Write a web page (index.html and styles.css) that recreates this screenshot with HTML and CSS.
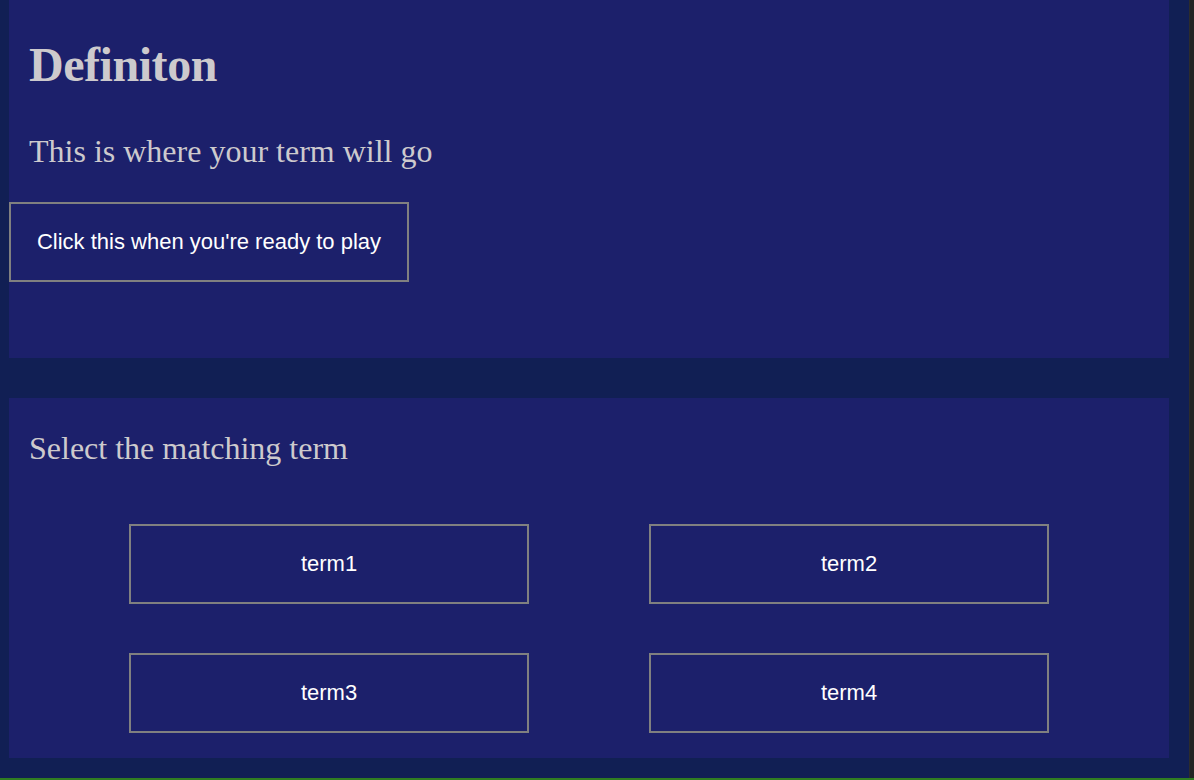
FILE: index.html
```html
<!DOCTYPE html>
<html lang="en">
<head>
<meta charset="utf-8">
<title>Definition Match</title>
<link rel="stylesheet" href="styles.css">
</head>
<body>
  <div class="frame">
    <main class="content">
      <section class="panel panel-def">
        <h1 class="def-title">Definiton</h1>
        <p class="def-text">This is where your term will go</p>
        <button class="btn btn-start" type="button">Click this when you're ready to play</button>
      </section>
      <section class="panel panel-terms">
        <p class="terms-prompt">Select the matching term</p>
        <div class="terms-grid">
          <button class="btn btn-term" type="button">term1</button>
          <button class="btn btn-term" type="button">term2</button>
          <button class="btn btn-term" type="button">term3</button>
          <button class="btn btn-term" type="button">term4</button>
        </div>
      </section>
    </main>
    <div class="scroll-edge"></div>
  </div>
  <div class="green-bar"></div>
</body>
</html>
```

FILE: styles.css
```css
html, body {
  margin: 0;
  padding: 0;
  height: 780px;
  overflow: hidden;
}

body {
  background: #111f54;
  font-family: "Liberation Serif", "Times New Roman", serif;
  display: flex;
  flex-direction: column;
}

.frame {
  display: flex;
  flex: 1;
}

.content {
  flex: 1;
  display: flex;
  flex-direction: column;
  gap: 40px;
  padding: 0 20px 20px 9px;
}

.scroll-edge {
  width: 5px;
  background: #232323;
  border-left: 1px solid #2c2c2c;
  box-sizing: border-box;
}

.green-bar {
  height: 2px;
  background: #2f7d22;
}

.panel {
  background: #1c206b;
  display: flex;
  flex-direction: column;
}

.panel-def {
  height: 358px;
  box-sizing: border-box;
  padding-top: 37px;
}

.def-title {
  margin: 0;
  padding-left: 20px;
  font-size: 48px;
  line-height: 56px;
  font-weight: bold;
  letter-spacing: -0.45px;
  color: #cdcacd;
}

.def-text,
.terms-prompt {
  margin: 0;
  padding-left: 20px;
  font-size: 32px;
  line-height: 40px;
  font-weight: normal;
  color: #cdcacd;
}

.def-text {
  margin-top: 38px;
}

.btn {
  box-sizing: border-box;
  width: 400px;
  height: 80px;
  border: 2px solid #808080;
  background: transparent;
  color: #ffffff;
  font-family: "Liberation Sans", Arial, Helvetica, sans-serif;
  font-size: 22px;
  padding: 0;
  margin: 0;
  cursor: pointer;
}

.btn-start {
  margin-top: 31px;
}

.panel-terms {
  height: 360px;
  box-sizing: border-box;
  padding-top: 30px;
}

.terms-grid {
  margin-top: 56px;
  display: grid;
  grid-template-columns: 400px 400px;
  column-gap: 120px;
  row-gap: 49px;
  justify-content: center;
}
```
